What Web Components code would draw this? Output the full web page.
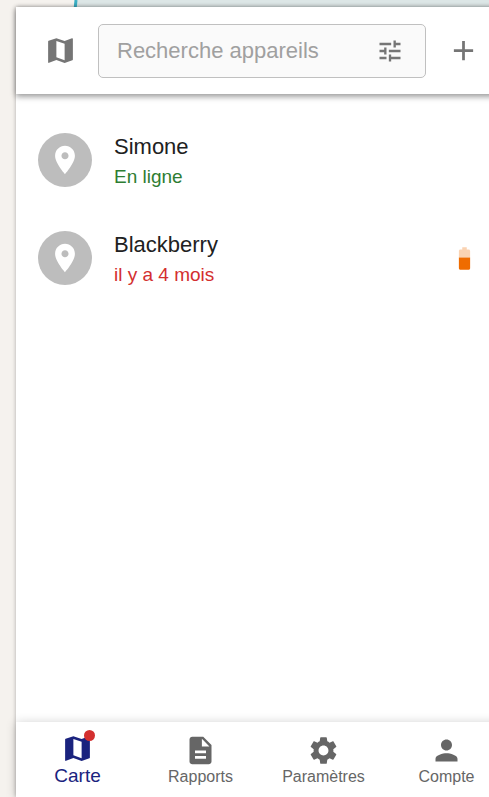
<!DOCTYPE html>
<html lang="fr">
<head>
<meta charset="utf-8">
<meta name="viewport" content="width=device-width, initial-scale=1">
<title>Carte</title>
<style>
  body {
    margin: 0;
    font-family: "Liberation Sans", Arial, sans-serif;
    color: #212121;
    background: #f5f2ee;
  }
</style>
</head>
<body>
<tracker-app>
  <search-bar slot="header" placeholder="Recherche appareils"></search-bar>
  <device-list>
    <device-row name="Simone" state="online">En ligne</device-row>
    <device-row name="Blackberry" state="offline" battery>il y a 4 mois</device-row>
  </device-list>
  <bottom-nav slot="footer">
    <nav-item icon="map" selected badge>Carte</nav-item>
    <nav-item icon="report">Rapports</nav-item>
    <nav-item icon="settings">Paramètres</nav-item>
    <nav-item icon="person">Compte</nav-item>
  </bottom-nav>
</tracker-app>

<script>
const icons = {
  map: '<path d="m20.5 3-.16.03L15 5.1 9 3 3.36 4.9c-.21.07-.36.25-.36.48V20.5c0 .28.22.5.5.5l.16-.03L9 18.9l6 2.1 5.64-1.9c.21-.07.36-.25.36-.48V3.5c0-.28-.22-.5-.5-.5M15 19l-6-2.11V5l6 2.11z"/>',
  tune: '<path d="M3 17v2h6v-2zM3 5v2h10V5zm10 16v-2h8v-2h-8v-2h-2v6zM7 9v2H3v2h4v2h2V9zm14 4v-2H11v2zm-6-4h2V7h4V5h-4V3h-2z"/>',
  add: '<path d="M19 13h-6v6h-2v-6H5v-2h6V5h2v6h6z"/>',
  place: '<path d="M12 2C8.13 2 5 5.13 5 9c0 5.25 7 13 7 13s7-7.75 7-13c0-3.87-3.13-7-7-7m0 9.5c-1.38 0-2.5-1.12-2.5-2.5s1.12-2.5 2.5-2.5 2.5 1.12 2.5 2.5-1.12 2.5-2.5 2.5"/>',
  battery: '<path fill-opacity=".3" d="M17 5.33C17 4.6 16.4 4 15.67 4H14V2h-4v2H8.33C7.6 4 7 4.6 7 5.33V11h10z"/><path d="M7 11v9.67C7 21.4 7.6 22 8.33 22h7.33c.74 0 1.34-.6 1.34-1.33V11z"/>',
  report: '<path d="M14 2H6c-1.1 0-1.99.9-1.99 2L4 20c0 1.1.89 2 1.99 2H18c1.1 0 2-.9 2-2V8zm2 16H8v-2h8zm0-4H8v-2h8zm-3-5V3.5L18.5 9z"/>',
  settings: '<path d="M19.14 12.94c.04-.3.06-.61.06-.94 0-.32-.02-.64-.07-.94l2.03-1.58c.18-.14.23-.41.12-.61l-1.92-3.32c-.12-.22-.37-.29-.59-.22l-2.39.96c-.5-.38-1.03-.7-1.62-.94l-.36-2.54c-.04-.24-.24-.41-.48-.41h-3.84c-.24 0-.43.17-.47.41l-.36 2.54c-.59.24-1.13.57-1.62.94l-2.39-.96c-.22-.08-.47 0-.59.22L2.74 8.87c-.12.21-.08.47.12.61l2.03 1.58c-.05.3-.09.63-.09.94s.02.64.07.94l-2.03 1.58c-.18.14-.23.41-.12.61l1.92 3.32c.12.22.37.29.59.22l2.39-.96c.5.38 1.03.7 1.62.94l.36 2.54c.05.24.24.41.48.41h3.84c.24 0 .44-.17.47-.41l.36-2.54c.59-.24 1.13-.56 1.62-.94l2.39.96c.22.08.47 0 .59-.22l1.92-3.32c.12-.22.07-.47-.12-.61zM12 15.6c-1.98 0-3.6-1.62-3.6-3.6s1.62-3.6 3.6-3.6 3.6 1.62 3.6 3.6-1.62 3.6-3.6 3.6"/>',
  person: '<path d="M12 12c2.21 0 4-1.79 4-4s-1.79-4-4-4-4 1.79-4 4 1.79 4 4 4m0 2c-2.67 0-8 1.34-8 4v2h16v-2c0-2.66-5.33-4-8-4"/>'
};

class UiIcon extends HTMLElement {
  constructor() {
    super();
    this.attachShadow({ mode: "open" });
  }

  connectedCallback() {
    this.shadowRoot.innerHTML = `
    <style>
      :host {
        display: block;
        flex: none;
        width: var(--icon-size, 33px);
        height: var(--icon-size, 33px);
      }
      svg {
        display: block;
        width: 100%;
        height: 100%;
        fill: currentColor;
      }
    </style>
    <svg viewBox="0 0 24 24" aria-hidden="true">${icons[this.getAttribute("name")]}</svg>
    `;
  }
}

class TrackerApp extends HTMLElement {
  constructor() {
    super();
    this.attachShadow({ mode: "open" });
    this.shadowRoot.innerHTML = `
    <style>
      :host {
        display: flex;
        box-sizing: border-box;
        height: 100vh;
        padding: 7px 0 0 16px;
        position: relative;
        overflow: hidden;
      }
      .map {
        position: absolute;
        top: 0;
        left: 0;
        width: 100%;
        height: 100%;
      }
      /* the panel runs a little past the right side of the screen */
      .panel {
        position: relative;
        flex: 1 0 auto;
        width: 100%;
        margin-right: -19px;
        display: flex;
        flex-direction: column;
        background: #fff;
        box-shadow: 0 0 4px rgba(0,0,0,0.3);
      }
      main {
        flex: 1;
        min-height: 0;
      }
    </style>
    <svg class="map" aria-hidden="true">
      <rect width="100%" height="100%" fill="#f5f2ee"/>
      <path d="M76 0h3000v60H70z" fill="#dce6e6"/>
      <path d="M76 0L74 20" stroke="#3bafc4" stroke-width="3" fill="none"/>
    </svg>
    <div class="panel">
      <slot name="header"></slot>
      <main><slot></slot></main>
      <slot name="footer"></slot>
    </div>
    `;
  }
}

class SearchBar extends HTMLElement {
  constructor() {
    super();
    this.attachShadow({ mode: "open" });
    this.shadowRoot.innerHTML = `
    <style>
      :host {
        display: flex;
        align-items: center;
        gap: 10px;
        padding: 16px 17px;
        position: relative;
        z-index: 1;
        background: #fff;
        box-shadow: 0 3px 6px rgba(0,0,0,0.28), 0 1px 6px rgba(0,0,0,0.2);
      }
      button {
        flex: none;
        margin: 0;
        padding: 11px;
        border: 0;
        border-radius: 50%;
        background: none;
        color: #757575;
        cursor: pointer;
      }
      .field {
        flex: 1;
        min-width: 0;
        display: flex;
        align-items: center;
        box-sizing: border-box;
        height: 54px;
        padding: 0 10px 0 18px;
        border: 1px solid #c0c0c0;
        border-radius: 5px;
        background: #fafafa;
      }
      .field button {
        --icon-size: 28px;
      }
      input {
        flex: 1;
        min-width: 0;
        padding: 0;
        border: 0;
        outline: 0;
        background: none;
        font: 22px "Liberation Sans", Arial, sans-serif;
        color: #212121;
      }
      input::placeholder {
        color: #a0a0a0;
        opacity: 1;
      }
    </style>
    <button aria-label="Carte"><ui-icon name="map"></ui-icon></button>
    <div class="field">
      <input type="text">
      <button aria-label="Filtres"><ui-icon name="tune"></ui-icon></button>
    </div>
    <button aria-label="Ajouter"><ui-icon name="add"></ui-icon></button>
    `;
  }

  connectedCallback() {
    const input = this.shadowRoot.querySelector("input");
    input.placeholder = this.getAttribute("placeholder");
    input.setAttribute("aria-label", input.placeholder);
  }
}

class DeviceList extends HTMLElement {
  constructor() {
    super();
    this.attachShadow({ mode: "open" });
    this.shadowRoot.innerHTML = `
    <style>
      :host {
        display: flex;
        flex-direction: column;
        padding-top: 17px;
      }
    </style>
    <slot></slot>
    `;
  }
}

class DeviceRow extends HTMLElement {
  constructor() {
    super();
    this.attachShadow({ mode: "open" });
    this.shadowRoot.innerHTML = `
    <style>
      :host {
        display: flex;
        align-items: center;
        gap: 22px;
        height: 98px;
        padding: 0 22px;
      }
      .avatar {
        --icon-size: 34px;
        flex: none;
        display: grid;
        place-items: center;
        width: 54px;
        height: 54px;
        border-radius: 50%;
        background: #bdbdbd;
        color: #fff;
      }
      .text {
        flex: 1;
        min-width: 0;
      }
      .name {
        font-size: 22px;
        line-height: 33px;
      }
      .status {
        font-size: 19px;
        line-height: 27px;
        color: #2e7d32;
      }
      :host([state="offline"]) .status {
        color: #d32f2f;
      }
      button {
        --icon-size: 27px;
        display: none;
        padding: 8px;
        border: 0;
        background: none;
        color: #ef6c00;
        cursor: pointer;
      }
      :host([battery]) button {
        display: block;
      }
    </style>
    <div class="avatar"><ui-icon name="place"></ui-icon></div>
    <div class="text">
      <div class="name"></div>
      <div class="status"><slot></slot></div>
    </div>
    <button aria-label="Batterie"><ui-icon name="battery"></ui-icon></button>
    `;
  }

  connectedCallback() {
    this.shadowRoot.querySelector(".name").textContent = this.getAttribute("name");
  }
}

class BottomNav extends HTMLElement {
  constructor() {
    super();
    this.attachShadow({ mode: "open" });
    this.shadowRoot.innerHTML = `
    <style>
      :host {
        display: block;
        position: relative;
        background: #fff;
        box-shadow: 0 1px 10px rgba(0,0,0,0.2);
      }
      nav {
        display: flex;
        height: 75px;
      }
    </style>
    <nav><slot></slot></nav>
    `;
  }
}

class NavItem extends HTMLElement {
  constructor() {
    super();
    this.attachShadow({ mode: "open" });
  }

  connectedCallback() {
    this.shadowRoot.innerHTML = `
    <style>
      :host {
        display: flex;
        flex: 1 1 0;
        min-width: 0;
      }
      button {
        flex: 1;
        min-width: 0;
        display: flex;
        flex-direction: column;
        align-items: center;
        justify-content: center;
        padding: 0;
        border: 0;
        background: none;
        color: #666;
        font: 16px/19px "Liberation Sans", Arial, sans-serif;
        cursor: pointer;
      }
      :host([selected]) button {
        color: #1a237e;
        font-size: 19px;
        line-height: 22px;
      }
      .icon {
        position: relative;
      }
      .badge {
        display: none;
        position: absolute;
        top: -2px;
        right: -1px;
        width: 11px;
        height: 11px;
        border-radius: 50%;
        background: #d32f2f;
      }
      :host([badge]) .badge {
        display: block;
      }
    </style>
    <button>
      <span class="icon">
        <ui-icon name="${this.getAttribute("icon")}"></ui-icon>
        <span class="badge"></span>
      </span>
      <span><slot></slot></span>
    </button>
    `;
  }
}

customElements.define("ui-icon", UiIcon);
customElements.define("tracker-app", TrackerApp);
customElements.define("search-bar", SearchBar);
customElements.define("device-list", DeviceList);
customElements.define("device-row", DeviceRow);
customElements.define("bottom-nav", BottomNav);
customElements.define("nav-item", NavItem);
</script>
</body>
</html>
